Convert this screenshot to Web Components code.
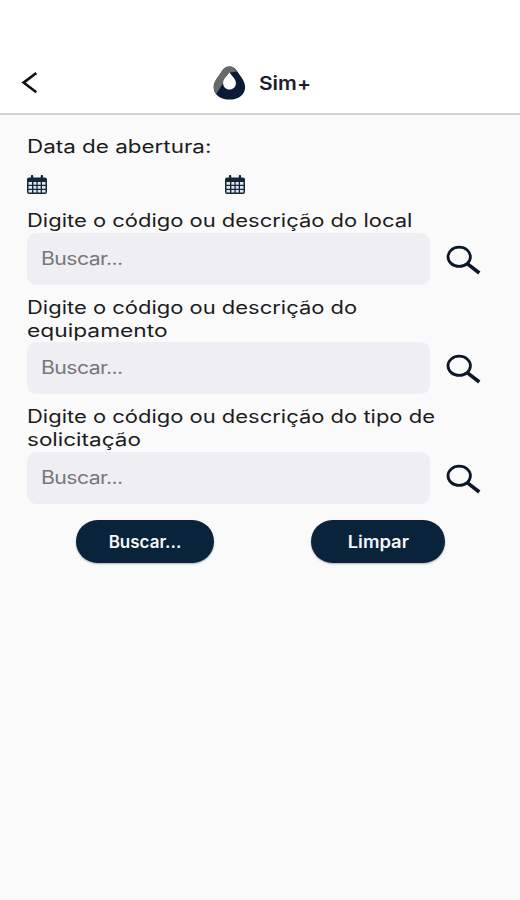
<!DOCTYPE html>
<html lang="pt-BR">
<head>
<meta charset="utf-8">
<title>Sim+</title>
<style>
    html, body {
        margin: 0;
        background: #fafafa;
        font-family: Inter, "Liberation Sans", sans-serif;
        color: #1c1c1e;
    }
</style>
</head>
<body>
<sim-page>
    <app-header slot="header">Sim+</app-header>
    <date-range>Data de abertura:</date-range>
    <search-field>
        <wide-text>Digite o código ou descrição do local</wide-text>
    </search-field>
    <search-field>
        <wide-text>Digite o código ou descrição do</wide-text>
        <wide-text style="--stretch: 1.265">equipamento</wide-text>
    </search-field>
    <search-field>
        <wide-text>Digite o código ou descrição do tipo de</wide-text>
        <wide-text style="--stretch: 1.25">solicitação</wide-text>
    </search-field>
    <pill-button slot="actions" style="width: 138px; --stretch: 1">Buscar...</pill-button>
    <pill-button slot="actions" style="width: 134px; --stretch: 1.08">Limpar</pill-button>
</sim-page>

<script>
class BaseElement extends HTMLElement {

    constructor() {
        super();
        this.shadowDOM = this.attachShadow({ mode: "open" });
        this.shadowDOM.innerHTML = this.template();
    }

}

// one line of text, stretched sideways by --stretch
class WideText extends BaseElement {

    template() {
        return `
        <style>
        :host {
            display: block;
            white-space: nowrap;
            transform: scaleX(var(--stretch, 1.22));
            transform-origin: var(--stretch-origin, left) center;
        }
        </style>
        <slot></slot>`;
    }

}

class SimPage extends BaseElement {

    template() {
        return `
        <style>
        :host {
            display: flex;
            flex-direction: column;
            height: 899px;
            overflow: hidden;
        }
        main {
            display: flex;
            flex-direction: column;
            padding: 20px 27px 0;
        }
        .actions {
            display: flex;
            justify-content: space-between;
            padding: 16px 48px 0 49px;
        }
        </style>
        <slot name="header"></slot>
        <main>
            <slot></slot>
            <div class="actions"><slot name="actions"></slot></div>
        </main>`;
    }

}

class AppHeader extends BaseElement {

    template() {
        return `
        <style>
        :host {
            display: grid;
            grid-template-columns: 213px 46px 1fr;
            align-items: center;
            box-sizing: border-box;
            height: 115px;
            padding-top: 52px;
            border-bottom: 2px solid #d2d2d3;
            background: #fff;
        }
        svg {
            display: block;
        }
        .back {
            margin-left: 20px;
        }
        wide-text {
            --stretch: 1.1;
            padding-top: 2px;
            font-size: 19px;
            font-weight: 600;
            line-height: 24px;
            color: #1d1d2b;
        }
        </style>
        <svg class="back" width="20" height="24" viewBox="0 0 20 24">
            <path d="M16.300 2 3.600 11.600l12.700 9.600" fill="none" stroke="#111" stroke-width="2.600"/>
        </svg>
        <svg width="33" height="34" viewBox="0 0 33 34">
            <path d="M16.500.6c3.400 0 5.700 1.700 8 5.100 3.800 5.500 7.600 9.500 7.600 15.500 0 7.300-6.700 12.400-15.600 12.400S.7 28.500.7 21.200C.7 15.200 5 11.200 8.500 5.700 10.800 2.300 13.100.6 16.500.6z" fill="#0c1b35"/>
            <path d="M24.300 5.500C22 2.200 19.900.6 16.500.6s-5.700 1.700-8 5.100C5 11.200.7 15.200.7 21.200c0 2.600.9 5 2.600 6.900L9.500 18 16.500 6.500z" fill="#686969"/>
            <path d="M16.500 6.200c1.700 3.300 6.400 6.300 6.400 11 0 3.800-2.900 6.300-6.400 6.300s-6.400-2.500-6.400-6.300c0-4.700 4.700-7.700 6.400-11z" fill="#fff"/>
        </svg>
        <wide-text><slot></slot></wide-text>`;
    }

}

class CalendarIcon extends BaseElement {

    template() {
        return `
        <style>
        :host, svg {
            display: block;
        }
        </style>
        <svg width="21" height="20" viewBox="0.500 0.500 21 20">
            <path d="M2.500 3h16a2 2 0 0 1 2 2v12.500a2 2 0 0 1-2 2h-16a2 2 0 0 1-2-2V5a2 2 0 0 1 2-2z" fill="#14263b"/>
            <path d="M5.600 1.500v3M15.400 1.500v3" stroke="#14263b" stroke-width="2.300" stroke-linecap="round"/>
            <path d="M2 7.600h3.500v2.700H2zM6.900 7.600h3v2.700h-3zM11.200 7.600h3v2.700h-3zM15.500 7.600H19v2.700h-3.500zM2 11.600h3.500v2.700H2zM6.900 11.600h3v2.700h-3zM11.200 11.600h3v2.700h-3zM15.500 11.600H19v2.700h-3.500zM2 15.600h3.500v2.500H2zM6.900 15.600h3v2.500h-3zM11.200 15.600h3v2.500h-3zM15.500 15.600H19v2.500h-3.500z" fill="#dfe6ed"/>
        </svg>`;
    }

}

class DateRange extends BaseElement {

    template() {
        return `
        <style>
        :host {
            display: block;
            height: 74px;
        }
        wide-text {
            --stretch: 1.245;
            font-size: 18px;
            line-height: 23px;
        }
        .dates {
            display: grid;
            grid-template-columns: 197.500px 1fr;
            margin-top: 17px;
        }
        </style>
        <wide-text><slot></slot></wide-text>
        <div class="dates">
            <calendar-icon></calendar-icon>
            <calendar-icon></calendar-icon>
        </div>`;
    }

}

class SearchField extends BaseElement {

    template() {
        return `
        <style>
        :host {
            display: block;
            margin-bottom: 11px;
        }
        :host(:last-of-type) {
            margin-bottom: 0;
        }
        .label {
            font-size: 18px;
            line-height: 23px;
        }
        .row {
            display: flex;
            align-items: center;
            gap: 16px;
            margin-top: 0.500px;
        }
        .box {
            box-sizing: border-box;
            width: 403px;
            height: 52px;
            padding: 0 14px;
            border-radius: 9px;
            background: #efeef3;
            font-size: 18px;
            line-height: 51px;
            color: #77777b;
        }
        .box wide-text {
            --stretch: 1.18;
            letter-spacing: -0.500px;
        }
        svg {
            display: block;
            margin-top: 2px;
        }
        </style>
        <div class="label"><slot></slot></div>
        <div class="row">
            <div class="box"><wide-text>Buscar...</wide-text></div>
            <svg width="36" height="30" viewBox="0 0 36 30">
                <ellipse cx="13.200" cy="11.800" rx="11.200" ry="9.600" fill="none" stroke="#0b1626" stroke-width="2.800"/>
                <path d="M21.500 18.800 33.300 28" stroke="#0b1626" stroke-width="3.600"/>
            </svg>
        </div>`;
    }

}

class PillButton extends BaseElement {

    template() {
        return `
        <style>
        :host {
            display: flex;
            align-items: center;
            justify-content: center;
            height: 43.500px;
            border-radius: 22px;
            background: #08233a;
            box-shadow: 0 1px 2px rgba(0, 0, 0, 0.300);
            color: #f4f6f8;
            font-size: 17px;
            font-weight: 600;
        }
        wide-text {
            --stretch-origin: center;
            padding-top: 1px;
        }
        </style>
        <wide-text><slot></slot></wide-text>`;
    }

}

customElements.define("wide-text", WideText);
customElements.define("calendar-icon", CalendarIcon);
customElements.define("app-header", AppHeader);
customElements.define("date-range", DateRange);
customElements.define("search-field", SearchField);
customElements.define("pill-button", PillButton);
customElements.define("sim-page", SimPage);
</script>
</body>
</html>
